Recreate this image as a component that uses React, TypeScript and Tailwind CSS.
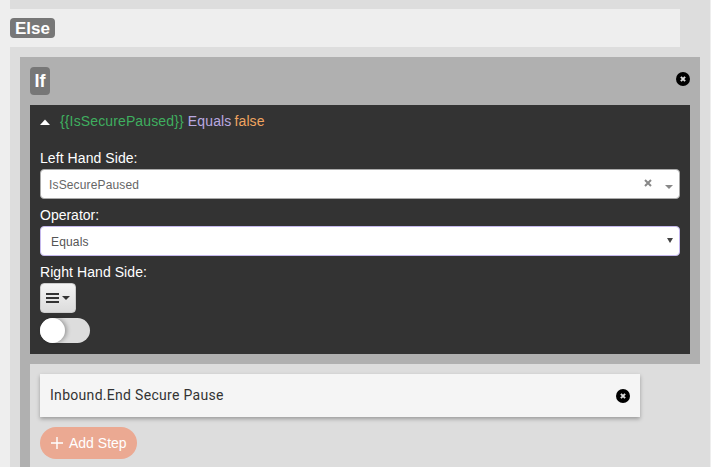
import React from "react";

const CloseIcon = () => (
  <svg width="14" height="14" viewBox="0 0 14 14" className="block">
    <circle cx="7" cy="7" r="7" fill="#000" />
    <path d="M4.9 4.9 L9.1 9.1 M9.1 4.9 L4.9 9.1" stroke="#dcdcdc" strokeWidth="2" />
  </svg>
);

export default function App() {
  return (
    <div className="h-[467px] w-[711px] overflow-hidden bg-[#eeeeee] font-['Liberation_Sans',Arial,sans-serif] text-[14px]">
      <div className="ml-[10px] mr-px h-full bg-[#dddddd] pt-[9px]">
        <div className="ml-[-10px] flex h-[38px] w-[680px] items-center bg-[#eeeeee] pl-[10px]">
          <span className="flex h-[20px] w-[45px] items-center justify-center rounded-[4px] bg-[#777777] text-[17px] font-bold leading-none text-white">
            Else
          </span>
        </div>
        <div className="mx-[10px] mt-[10px] h-[420px] bg-[#b0b0b0]">
          <div className="flex h-[48px] items-start justify-between px-[10px] pt-[10px]">
            <span className="flex h-[28px] w-[20px] items-center justify-center rounded-[4px] bg-[#777777] text-[18px] font-bold leading-none text-white">
              If
            </span>
            <span className="mt-[5px]">
              <CloseIcon />
            </span>
          </div>
          <div className="mx-[10px] h-[249px] bg-[#333333] px-[10px]">
            <div className="flex h-[33px] items-center">
              <svg width="10" height="6" viewBox="0 0 10 6" className="mr-[10px] mt-[1px] block">
                <path d="M0 6 L5 0.5 L10 6 Z" fill="#fff" />
              </svg>
              <span className="tracking-[0.13px] text-[#3fae5f]">{"{{IsSecurePaused}}"}</span>
              <span className="ml-[4px] tracking-[0.15px] text-[#b9a9e0]">Equals</span>
              <span className="ml-[3px] tracking-[0.1px] text-[#f0a460]">false</span>
            </div>
            <div className="mt-[10px] h-[20px] leading-[20px] tracking-[0.07px] text-white">Left Hand Side:</div>
            <div className="relative mt-px flex h-[30px] items-center rounded-[4px] border border-[#aaaaaa] bg-white pl-[8px] pt-px text-[12px] tracking-[0.15px] text-[#666666]">
              IsSecurePaused
              <svg width="8" height="8" viewBox="0 0 8 8" className="absolute right-[27px] top-[9px] block">
                <path d="M1 1 L7 7 M7 1 L1 7" stroke="#888888" strokeWidth="2" />
              </svg>
              <span className="absolute right-[6px] top-[15px] h-0 w-0 border-x-[4.5px] border-t-[4px] border-x-transparent border-t-[#888888]" />
            </div>
            <div className="mt-[6px] h-[20px] leading-[20px] text-white">Operator:</div>
            <div className="relative mt-px flex h-[30px] items-center rounded-[4px] border border-[#c4b8ec] bg-white pl-[10px] pt-px text-[12px] tracking-[0.15px] text-[#555555]">
              Equals
              <span className="absolute right-[6px] top-[11px] h-0 w-0 border-x-[3px] border-t-[5px] border-x-transparent border-t-[#444444]" />
            </div>
            <div className="mt-[6px] h-[20px] leading-[20px] tracking-[0.07px] text-white">Right Hand Side:</div>
            <div className="mt-px flex h-[30px] w-[36px] items-center justify-center gap-[3px] rounded-[4px] border border-[#cccccc] bg-gradient-to-b from-[#f4f4f4] to-[#dcdcdc]">
              <svg width="13" height="10" viewBox="0 0 13 10" className="block">
                <path d="M0 0h13v2H0zM0 4h13v2H0zM0 8h13v2H0z" fill="#333" />
              </svg>
              <span className="h-0 w-0 border-x-[4px] border-t-[4px] border-x-transparent border-t-[#333333]" />
            </div>
            <div className="relative mt-[5px] h-[25px] w-[50px] rounded-full bg-[#dddddd]">
              <span className="absolute left-0 top-0 h-[25px] w-[25px] rounded-full bg-white shadow-[2px_0_4px_rgba(0,0,0,0.3)]" />
            </div>
          </div>
          <div className="ml-[10px] mt-[10px] h-[110px] bg-[#dddddd] pl-[10px] pt-[10px]">
            <div className="flex h-[43px] w-[600px] items-center justify-between bg-[#f5f5f5] pl-[10px] pr-[10px] text-[14px] text-[#333333] shadow-[0_2px_4px_rgba(0,0,0,0.3)]">
              <span className="font-['Roboto',sans-serif] tracking-[0.3px]">Inbound.End Secure Pause</span>
              <CloseIcon />
            </div>
            <div className="mt-[10px] flex h-[32px] w-[97px] items-center rounded-full bg-[#eba992] pl-[11px] text-[14px] text-white">
              <svg width="12" height="12" viewBox="0 0 12 12" className="mr-[6px] block">
                <path d="M6 0v12M0 6h12" stroke="#fff" strokeWidth="1.4" />
              </svg>
              Add Step
            </div>
          </div>
        </div>
      </div>
    </div>
  );
}
